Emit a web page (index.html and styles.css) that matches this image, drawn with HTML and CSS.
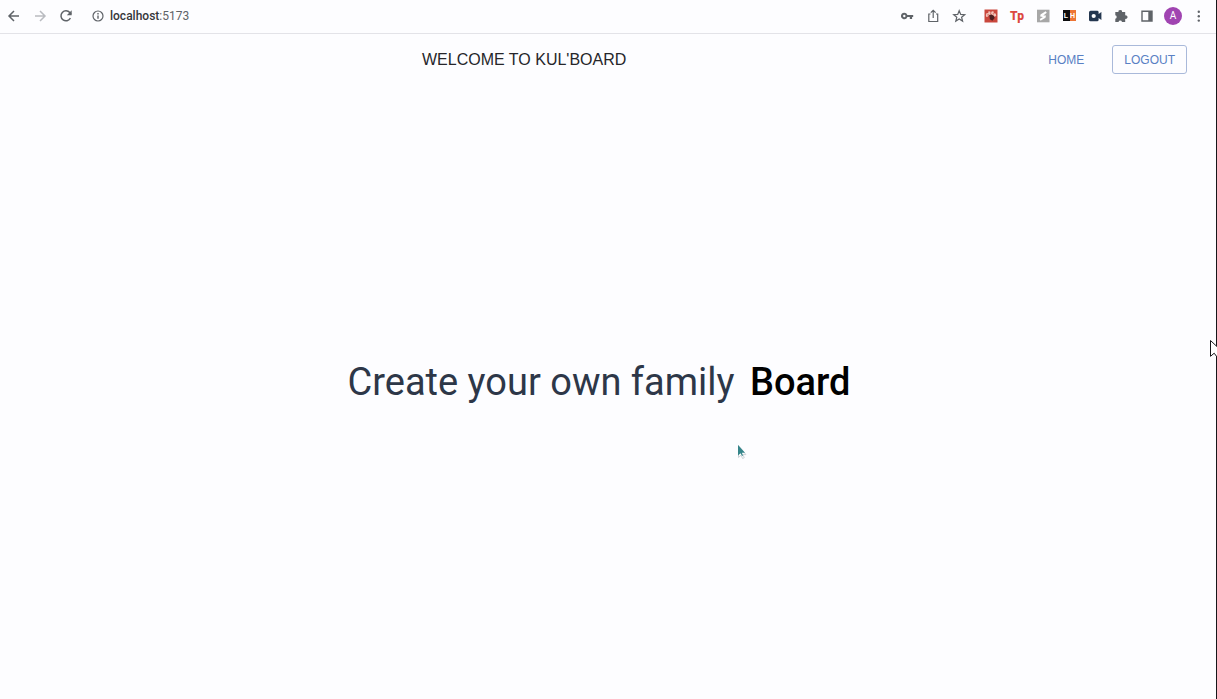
FILE: index.html
```html
<!DOCTYPE html>
<html lang="en">
<head>
<meta charset="utf-8">
<title>Kul'Board</title>
<link rel="stylesheet" href="styles.css">
</head>
<body>
<div class="window">
  <div class="toolbar">
    <div class="nav-tools">
      <button class="tool" aria-label="Back"><svg viewBox="0 0 18 18"><path class="line" d="M14 9H4.5M9 4 4 9l5 5"/></svg></button>
      <button class="tool faded" aria-label="Forward"><svg viewBox="0 0 18 18"><path class="line" d="M4 9h9.5M9 4l5 5-5 5"/></svg></button>
      <button class="tool" aria-label="Reload"><svg viewBox="0 0 18 18"><path class="line" d="M13.4 11.2A5 5 0 1 1 12.8 5.6L14 7"/><path d="M14.7 3.3v5H9.8z"/></svg></button>
    </div>
    <div class="address">
      <svg class="info" viewBox="0 0 14 14" aria-hidden="true"><circle class="line thin" cx="7" cy="7" r="5"/><path d="M6.3 6.4h1.4v3.4H6.3zM6.3 4.1h1.4v1.4H6.3z"/></svg>
      <span class="host">localhost<span class="port">:5173</span></span>
    </div>
    <div class="page-tools">
      <button class="tool" aria-label="Passwords"><svg viewBox="0 0 18 18"><path fill-rule="evenodd" d="M6.3 5.7a3.3 3.3 0 0 1 3.1 2.2h5.8v2.2h-1.1v2h-2.3v-2H9.4A3.3 3.3 0 1 1 6.3 5.7zm0 2.1a1.2 1.2 0 1 0 0 2.4 1.2 1.2 0 0 0 0-2.4z"/></svg></button>
      <button class="tool" aria-label="Share"><svg viewBox="0 0 18 18"><path class="line thin" d="M6.5 7H4.8v7.5h8.9V7H12M9.2 11V3.5M6.8 5.7l2.4-2.4 2.4 2.4"/></svg></button>
      <button class="tool" aria-label="Bookmark"><svg viewBox="0 0 18 18"><path class="line thin" d="m9.2 3.7 1.5 3.7 4 .3-3.1 2.5 1 3.9-3.4-2.1-3.4 2.1 1-3.9-3.1-2.5 4-.3z"/></svg></button>
    </div>
    <div class="extensions">
      <button class="tool" aria-label="Paw extension"><svg viewBox="0 0 18 18"><path fill="#c9473d" d="M2.5 2.5h13v13h-13z"/><path fill="#f1c7bd" d="m3.8 8 .9-2 1.5.2.3-2 1.7.2.8 1.3.9-1.4 1.8.2v1.8l1.9.3.7 2-1.6 1.5-1-1.4-2-1.2-2.3.2-1.8 2-1.3.4z"/><path fill="#4b2022" d="m7.3 8.2 1.9-.8 2.8 1.5.6 2.2-2.2 2.6-2.5-1.4z"/><path fill="#c9473d" d="m5.4 7.4 1-.4.3 1.2-.9.6zM8.2 5.6h1v1.2h-1zM10.9 6.2l1 .2-.3 1.2-.9-.3z"/></svg></button>
      <button class="tool"><span class="tp">Tp</span></button>
      <button class="tool" aria-label="Stack extension"><svg viewBox="0 0 18 18"><path fill="#a7a7a7" d="M3 2.7h12.5v12.6H3z"/><path fill="#fff" d="m11.6 4.2 1.2 1.6-3.5 2.6 2.7.2-.5 2.2-5 3-.8-1.8 3.3-2.1-2.8-.3.3-2z"/></svg></button>
      <button class="tool"><span class="lh"><span class="l">L</span><span class="h">H</span></span></button>
      <button class="tool" aria-label="Video recorder"><svg viewBox="0 0 18 18"><path fill="#243750" d="M4.6 3.8h6.6A1.4 1.4 0 0 1 12.6 5v2l2.8-2v8l-2.8-2v2a1.4 1.4 0 0 1-1.4 1.3H4.6A1.6 1.6 0 0 1 3 12.7V5.4a1.6 1.6 0 0 1 1.6-1.6z"/><circle cx="7.7" cy="9" r="2.1" fill="#fff"/></svg></button>
      <button class="tool" aria-label="Extensions"><svg viewBox="0 0 18 18"><path d="M3.3 5.1h3.2a1.8 1.8 0 1 1 3.5 0h3.2v3.3a1.8 1.8 0 1 1 0 3.4V15H10a1.8 1.8 0 0 0-3.5 0H3.3v-3.2a1.8 1.8 0 0 0 0-3.5z"/></svg></button>
      <button class="tool" aria-label="Side panel"><svg viewBox="0 0 18 18"><path fill-rule="evenodd" d="M3.3 3.5h11.4v11.2H3.3zm1.4 1.4v8.4h5.6V4.9z"/></svg></button>
      <button class="tool"><span class="avatar">A</span></button>
      <button class="tool" aria-label="Menu"><svg viewBox="0 0 18 18"><circle cx="8.8" cy="4.8" r="1.2"/><circle cx="8.8" cy="9.2" r="1.2"/><circle cx="8.8" cy="13.6" r="1.2"/></svg></button>
    </div>
  </div>

  <header class="header">
    <h1 class="title">WELCOME TO KUL'BOARD</h1>
    <nav class="menu">
      <a class="home" href="#">HOME</a>
      <button class="logout">LOGOUT</button>
    </nav>
  </header>

  <main class="hero">
    <p class="tagline">Create your own family <strong class="brand">Board</strong></p>
  </main>

  <svg class="pointer" viewBox="0 0 10 16" aria-hidden="true"><path fill="#fff" stroke="#cdd3d8" d="M1.5 1.5v12l2.6-2.3 1.5 3.3 1.7-.8-1.5-3.1h3.1z"/><path fill="#35858a" d="M1 1v10.500l2.500-2.300 1.600 2.800.9-.5L4.900 8.700H8z"/></svg>
  <svg class="edge-pointer" viewBox="0 0 7 18" aria-hidden="true"><path fill="#fff" stroke="#16161a" d="M9 8.5.5.5v15.8l3.7-3.1L7 17"/></svg>
</div>
</body>
</html>
```

FILE: styles.css
```css
* {
  box-sizing: border-box;
}

body {
  margin: 0;
  background: #fdfdff;
  font-family: "Liberation Sans", Arial, sans-serif;
}

.window {
  position: relative;
  display: flex;
  flex-direction: column;
  min-height: 100vh;
  border-right: 1px solid #16161a;
}

button {
  padding: 0;
  border: 0;
  background: none;
  font: inherit;
  color: inherit;
}

.toolbar {
  display: flex;
  align-items: center;
  height: 34px;
  padding: 0 8px 2px 5px;
  border-bottom: 1px solid #e3e3e8;
  color: #5f6368;
}

.nav-tools,
.page-tools,
.extensions {
  display: flex;
  gap: 8px;
}

.extensions {
  margin-left: 14px;
}

.tool {
  display: grid;
  place-items: center;
  width: 18px;
  height: 18px;
}

.tool svg {
  display: block;
  width: 18px;
  height: 18px;
}

svg {
  fill: currentColor;
}

.line {
  fill: none;
  stroke: currentColor;
  stroke-width: 1.5;
}

.thin {
  stroke-width: 1.2;
}

.faded {
  color: #b9bbc0;
}

.address {
  display: flex;
  flex: 1;
  align-items: center;
  gap: 5px;
  margin-left: 16px;
}

.info {
  width: 14px;
  height: 14px;
}

.host {
  font-family: Roboto, sans-serif;
  font-size: 12px;
  font-weight: 500;
  color: #35363a;
}

.port {
  font-weight: 400;
  color: #5f6368;
}

.tp {
  font-family: Roboto, sans-serif;
  font-size: 12px;
  font-weight: 900;
  line-height: 16px;
  color: #dc4840;
}

.lh {
  display: flex;
  font-size: 7px;
  font-weight: 700;
  line-height: 11px;
  text-align: center;
  color: #fff;
}

.l {
  width: 7px;
  background: #0c0c0e;
}

.h {
  width: 6px;
  background: #ed7434;
}

.avatar {
  display: grid;
  place-items: center;
  width: 18px;
  height: 18px;
  border-radius: 50%;
  background: #a044b1;
  font-family: Roboto, sans-serif;
  font-size: 10px;
  color: #fff;
}

.header {
  display: flex;
  align-items: center;
  padding: 11px 29px 10px 0;
}

.title {
  flex: 1;
  margin: 0;
  font-size: 16px;
  font-weight: 400;
  line-height: 24px;
  text-align: center;
  color: #26262a;
}

.menu {
  display: flex;
  align-items: center;
  gap: 28px;
  font-size: 12px;
  color: #5880c4;
}

.home {
  color: inherit;
  text-decoration: none;
}

.logout {
  height: 29px;
  padding: 0 11px;
  border: 1px solid #a9b9da;
  border-radius: 3px;
}

.hero {
  display: grid;
  flex: 1;
  place-items: center;
  padding: 0 18px 20px 0;
}

.tagline {
  margin: 0;
  font-family: Roboto, sans-serif;
  font-size: 38px;
  line-height: 48px;
  color: #2d3748;
}

.brand {
  margin-left: 6px;
  font-weight: 500;
  color: #000;
}

.pointer {
  position: absolute;
  top: 444px;
  left: 737px;
  width: 10px;
  height: 16px;
}

.edge-pointer {
  position: absolute;
  top: 340px;
  right: -1px;
  width: 7px;
  height: 18px;
}
```
